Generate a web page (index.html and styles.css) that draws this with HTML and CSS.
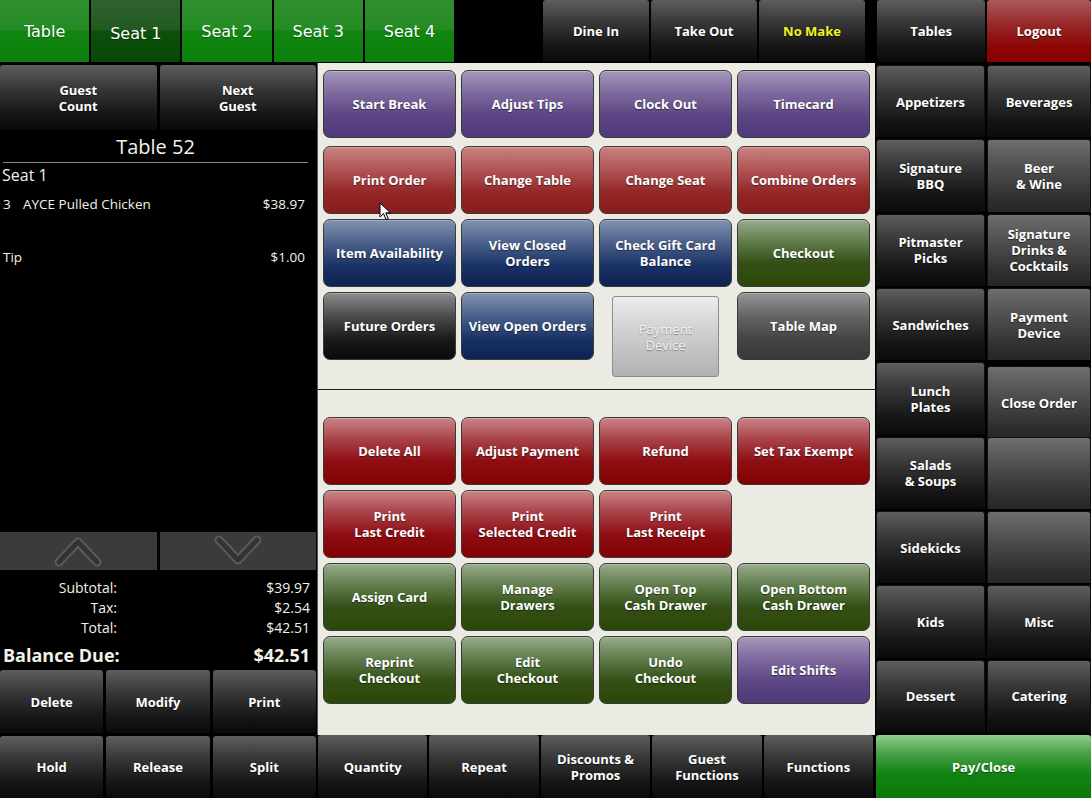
FILE: index.html
```html
<!DOCTYPE html>
<html lang="en">
<head>
    <meta charset="UTF-8">
    <meta name="viewport" content="width=device-width, initial-scale=1.0">
    <title>Order Entry - Table 52</title>
    <link rel="stylesheet" href="styles.css">
</head>
<body>
    <div class="pos">
        <header class="topbar">
            <div class="seat-tabs">
                <button class="tab">Table</button>
                <button class="tab active">Seat 1</button>
                <button class="tab">Seat 2</button>
                <button class="tab">Seat 3</button>
                <button class="tab">Seat 4</button>
            </div>
            <div class="order-types">
                <button class="gloss">Dine In</button>
                <button class="gloss">Take Out</button>
                <button class="gloss no-make">No Make</button>
            </div>
            <div class="session">
                <button class="gloss tables">Tables</button>
                <button class="gloss logout">Logout</button>
            </div>
        </header>

        <aside class="check">
            <div class="guest-row">
                <button class="gloss">Guest<br>Count</button>
                <button class="gloss">Next<br>Guest</button>
            </div>
            <div class="check-title">Table 52</div>
            <div class="seat-label">Seat 1</div>
            <div class="order-lines">
                <div class="line-item">
                    <span class="item-name"><span class="qty">3</span>AYCE Pulled Chicken</span>
                    <span>$38.97</span>
                </div>
                <div class="line-item tip">
                    <span>Tip</span>
                    <span>$1.00</span>
                </div>
            </div>
            <div class="scroll-row">
                <button class="scroll-btn">
                    <svg width="50" height="34" viewBox="0 0 50 34">
                        <polyline points="6,28 25,8 44,28" fill="none" stroke="#5c5c5c" stroke-width="9" stroke-linecap="round" stroke-linejoin="round"/>
                        <polyline points="6,28 25,8 44,28" fill="none" stroke="#333" stroke-width="5" stroke-linecap="round" stroke-linejoin="round"/>
                    </svg>
                </button>
                <button class="scroll-btn">
                    <svg width="50" height="34" viewBox="0 0 50 34">
                        <polyline points="6,6 25,26 44,6" fill="none" stroke="#5c5c5c" stroke-width="9" stroke-linecap="round" stroke-linejoin="round"/>
                        <polyline points="6,6 25,26 44,6" fill="none" stroke="#333" stroke-width="5" stroke-linecap="round" stroke-linejoin="round"/>
                    </svg>
                </button>
            </div>
            <div class="totals">
                <span class="label">Subtotal:</span><span class="value">$39.97</span>
                <span class="label">Tax:</span><span class="value">$2.54</span>
                <span class="label">Total:</span><span class="value">$42.51</span>
                <span class="label balance">Balance Due:</span><span class="value balance">$42.51</span>
            </div>
            <div class="check-actions">
                <button class="gloss">Delete</button>
                <button class="gloss">Modify</button>
                <button class="gloss">Print</button>
            </div>
        </aside>

        <main class="actions">
            <div class="actions-top">
                <button class="key purple">Start Break</button>
                <button class="key purple">Adjust Tips</button>
                <button class="key purple">Clock Out</button>
                <button class="key purple">Timecard</button>

                <button class="key red">Print Order</button>
                <button class="key red">Change Table</button>
                <button class="key red">Change Seat</button>
                <button class="key red">Combine Orders</button>

                <button class="key blue">Item Availability</button>
                <button class="key blue">View Closed<br>Orders</button>
                <button class="key blue">Check Gift Card<br>Balance</button>
                <button class="key green">Checkout</button>

                <button class="key black">Future Orders</button>
                <button class="key blue">View Open Orders</button>
                <button class="key disabled">Payment<br>Device</button>
                <button class="key gray">Table Map</button>
            </div>
            <div class="actions-bottom">
                <button class="key crimson">Delete All</button>
                <button class="key crimson">Adjust Payment</button>
                <button class="key crimson">Refund</button>
                <button class="key crimson">Set Tax Exempt</button>

                <button class="key crimson">Print<br>Last Credit</button>
                <button class="key crimson">Print<br>Selected Credit</button>
                <button class="key crimson">Print<br>Last Receipt</button>
                <span></span>

                <button class="key green">Assign Card</button>
                <button class="key green">Manage<br>Drawers</button>
                <button class="key green">Open Top<br>Cash Drawer</button>
                <button class="key green">Open Bottom<br>Cash Drawer</button>

                <button class="key green">Reprint<br>Checkout</button>
                <button class="key green">Edit<br>Checkout</button>
                <button class="key green">Undo<br>Checkout</button>
                <button class="key purple">Edit Shifts</button>
            </div>
        </main>

        <nav class="menu">
            <button class="gloss">Appetizers</button>
            <button class="gloss">Beverages</button>
            <button class="gloss">Signature<br>BBQ</button>
            <button class="gloss light">Beer<br>&amp; Wine</button>
            <button class="gloss">Pitmaster<br>Picks</button>
            <button class="gloss light">Signature<br>Drinks &amp;<br>Cocktails</button>
            <button class="gloss">Sandwiches</button>
            <button class="gloss light">Payment<br>Device</button>
            <button class="gloss">Lunch<br>Plates</button>
            <button class="gloss light shifted">Close Order</button>
            <button class="gloss">Salads<br>&amp; Soups</button>
            <button class="gloss light"></button>
            <button class="gloss">Sidekicks</button>
            <button class="gloss light"></button>
            <button class="gloss">Kids</button>
            <button class="gloss">Misc</button>
            <button class="gloss">Dessert</button>
            <button class="gloss">Catering</button>
        </nav>

        <div class="check-footer">
            <button class="gloss">Hold</button>
            <button class="gloss">Release</button>
            <button class="gloss">Split</button>
        </div>

        <div class="toolbar">
            <button class="gloss">Quantity</button>
            <button class="gloss">Repeat</button>
            <button class="gloss">Discounts &amp;<br>Promos</button>
            <button class="gloss">Guest<br>Functions</button>
            <button class="gloss">Functions</button>
        </div>

        <div class="pay">
            <button class="pay-btn">Pay/Close</button>
        </div>

        <!-- pointer -->
        <svg class="cursor" width="13" height="20" viewBox="0 0 13 20">
            <path d="M1 1 L1 15 L4.5 11.5 L7 17.5 L9.2 16.6 L6.8 10.8 L11.5 10.8 Z" fill="#fff" stroke="#000" stroke-width="1" stroke-linejoin="round"/>
        </svg>
    </div>
</body>
</html>
```

FILE: styles.css
```css
* {
    margin: 0;
    padding: 0;
    box-sizing: border-box;
}

body {
    background: #000;
    font-family: "Open Sans", "Liberation Sans", sans-serif;
    color: #fff;
    overflow: hidden;
}

button {
    border: none;
    font-family: inherit;
    color: inherit;
    cursor: pointer;
    background: none;
}

.pos {
    position: relative;
    width: 1091px;
    height: 798px;
    display: grid;
    grid-template-columns: 318px 557px 216px;
    grid-template-rows: 63px 672px 63px;
    background: #000;
}

/* top bar */

.topbar {
    grid-column: 1 / -1;
    display: flex;
    height: 62px;
}

.seat-tabs {
    display: flex;
    gap: 2px;
    width: 454px;
}

.tab {
    flex: 1;
    font-family: "DejaVu Sans", sans-serif;
    font-size: 16px;
    color: #fff;
    background: linear-gradient(#2f8f2f 0%, #248b24 48%, #118611 50%, #0c800c 100%);
    text-shadow: 0 1px 1px rgba(0, 0, 0, 0.3);
}

.tab.active {
    background: linear-gradient(#2f622f 0%, #215a21 48%, #0b500b 50%, #064806 100%);
    padding-top: 4px;
}

.order-types {
    display: flex;
    gap: 2px;
    margin-left: 89px;
}

.order-types .gloss {
    width: 106px;
}

.order-types .no-make {
    color: #f2f21e;
}

.session {
    display: flex;
    gap: 2px;
    margin-left: 12px;
}

.session .tables {
    width: 108px;
}

.session .logout {
    width: 104px;
    background: linear-gradient(#a85a5a 0%, #972727 40%, #8c0606 75%, #880000 100%);
}

/* black gloss buttons */

.gloss {
    font-size: 13px;
    font-weight: 700;
    line-height: 16px;
    color: #fff;
    background: linear-gradient(#5e5e5e 0%, #383838 35%, #161616 75%, #0a0a0a 100%);
    border-radius: 3px 3px 0 0;
    text-shadow: 0 1px 1px rgba(0, 0, 0, 0.6);
}

.gloss.light {
    background: linear-gradient(#6e6e6e 0%, #4e4e4e 40%, #303030 80%, #262626 100%);
}

/* check panel */

.check {
    display: flex;
    flex-direction: column;
    padding: 2px 2px 2px 0;
    color: #f4f1e6;
}

.guest-row {
    display: flex;
    gap: 3px;
    height: 65px;
}

.guest-row .gloss {
    flex: 1;
}

.check-title {
    margin: 0 8px 0 3px;
    height: 33px;
    padding-top: 3px;
    font-size: 20px;
    line-height: 28px;
    text-align: center;
    border-bottom: 1px solid #8a8a8a;
}

.seat-label {
    font-size: 16px;
    line-height: 24px;
    padding-left: 2px;
}

.order-lines {
    flex: 1;
}

.line-item {
    display: flex;
    justify-content: space-between;
    margin-top: 7px;
    padding: 0 11px 0 3px;
    font-size: 13.5px;
    line-height: 20px;
}

.line-item.tip {
    margin-top: 33px;
}

.qty {
    display: inline-block;
    width: 20px;
}

.scroll-row {
    display: flex;
    gap: 3px;
    height: 38px;
}

.scroll-btn {
    flex: 1;
    display: flex;
    align-items: center;
    justify-content: center;
    background: #3b3b3b;
}

.totals {
    display: grid;
    grid-template-columns: 117px 1fr;
    align-content: start;
    height: 97px;
    padding: 8px 6px 0 0;
    font-size: 14px;
    line-height: 20px;
}

.totals .label {
    text-align: right;
}

.totals .value {
    text-align: right;
}

.totals .balance {
    font-size: 18px;
    font-weight: 700;
    line-height: 26px;
    margin-top: 4px;
}

.totals .label.balance {
    text-align: left;
    padding-left: 3px;
    white-space: nowrap;
}

.check-actions {
    display: flex;
    gap: 3px;
    height: 63px;
    margin-top: 3px;
}

.check-actions .gloss {
    flex: 1;
}

/* action keys */

.actions {
    background: #ecebe3;
    border-left: 1px solid #5a5a5a;
    margin-left: -1px;
}

.actions-top {
    height: 327px;
    display: grid;
    grid-template-columns: repeat(4, 1fr);
    grid-template-rows: 71px 68px 68px 68px;
    column-gap: 5px;
    row-gap: 5px;
    padding: 7px 5px 0 5px;
    border-bottom: 1px solid #1c1c1c;
}

.actions-top > :nth-child(-n+4) {
    margin-bottom: 3px;
}

.actions-bottom {
    display: grid;
    grid-template-columns: repeat(4, 1fr);
    grid-template-rows: repeat(4, 68px);
    gap: 5px;
    padding: 27px 5px 0 5px;
}

.key {
    border-radius: 7px;
    border: 1px solid #3a3a3a;
    font-size: 13px;
    font-weight: 700;
    line-height: 16px;
    color: #fff;
    text-shadow: 0 1px 1px rgba(0, 0, 0, 0.5);
    box-shadow: inset 0 1px 0 rgba(255, 255, 255, 0.25);
}

.key.purple {
    background: linear-gradient(#a597ba 0%, #7c689c 35%, #5b4584 68%, #503979 100%);
}

.key.red {
    background: linear-gradient(#c98282 0%, #b05454 35%, #932525 70%, #881c1c 100%);
}

.key.crimson {
    background: linear-gradient(#c98486 0%, #a9434a 32%, #8d0d12 66%, #820202 100%);
}

.key.blue {
    background: linear-gradient(#8293b0 0%, #4a6089 35%, #1a3166 70%, #0e2353 100%);
}

.key.green {
    background: linear-gradient(#98ac8c 0%, #617d4d 32%, #334f15 66%, #2b4708 100%);
}

.key.black {
    background: linear-gradient(#8c8c8c 0%, #4c4c4c 35%, #1a1a1a 70%, #0a0a0a 100%);
}

.key.gray {
    background: linear-gradient(#959595 0%, #656565 35%, #444 70%, #383838 100%);
}

.key.disabled {
    margin: 4px 13px -17px 13px;
    border-radius: 3px;
    border: 1px solid #8c8c8c;
    font-weight: 400;
    color: #f4f4f4;
    text-shadow: 0 1px 1px rgba(0, 0, 0, 0.35);
    background: linear-gradient(#ececec 0%, #d2d2d2 40%, #bebebe 75%, #b2b2b2 100%);
    box-shadow: none;
    cursor: default;
}

/* menu categories */

.menu {
    display: grid;
    grid-template-columns: 109px 1fr;
    grid-template-rows: repeat(9, 1fr);
    gap: 2px;
    padding: 2px 0 3px 1px;
}

.menu .gloss {
    border: 1px solid #111;
    border-bottom: none;
}

.menu .shifted {
    margin: 4px 0 -4px;
}

/* bottom rows */

.check-footer {
    display: flex;
    gap: 3px;
    padding: 1px 2px 0 0;
}

.check-footer .gloss {
    flex: 1;
}

.toolbar {
    display: flex;
    gap: 2px;
    padding: 0 2px 0 0;
}

.toolbar .gloss {
    flex: 1;
}

.pay {
    display: flex;
    padding-left: 1px;
}

.pay-btn {
    flex: 1;
    font-size: 13px;
    font-weight: 700;
    color: #fff;
    text-shadow: 0 1px 1px rgba(0, 0, 0, 0.5);
    background: linear-gradient(#8fcd8f 0%, #46a046 30%, #128312 62%, #0a790a 100%);
    border-radius: 3px 3px 0 0;
}

.cursor {
    position: absolute;
    left: 379px;
    top: 202px;
    pointer-events: none;
}
```
